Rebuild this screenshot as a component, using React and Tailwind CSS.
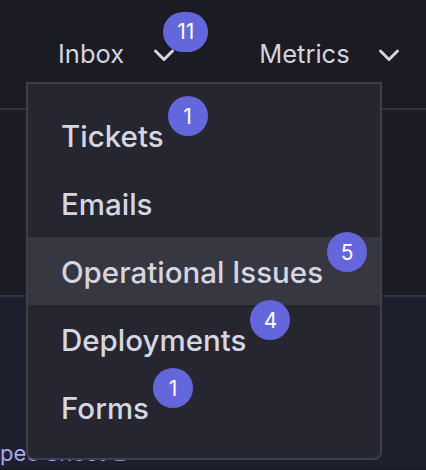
import React from 'react';
import { ExternalLink } from 'lucide-react';

const items = [
  { label: 'Tickets', count: 1 },
  { label: 'Emails' },
  { label: 'Operational Issues', count: 5, active: true },
  { label: 'Deployments', count: 4 },
  { label: 'Forms', count: 1 },
];

const Chevron = () => (
  <svg width="22" height="15" viewBox="0 0 22 15" fill="none">
    <path d="M2.5 3 L11 11.5 L19.5 3" stroke="#d4d4de" strokeWidth="3" strokeLinecap="round" strokeLinejoin="round" />
  </svg>
);

const Badge = ({ children, className = '' }) => (
  <span className={`absolute flex h-10 min-w-10 items-center justify-center rounded-full bg-[#6466dc] px-3 text-[21px] font-normal leading-none text-white ${className}`}>
    {children}
  </span>
);

export default function App() {
  return (
    <div className="relative h-[470px] w-full overflow-hidden bg-[#1b1b23] font-['Inter',sans-serif]">
      {/* top navigation */}
      <nav className="flex h-[110px] items-start border-b-2 border-[#33333d] pt-[37px] pl-[58px]">
        <div className="flex items-center gap-[29px]">
          <span className="text-[25.5px] leading-[34px] text-[#d4d4de]">Inbox</span>
          <span className="relative mt-[2px]">
            <Chevron />
            <Badge className="left-[10px] -top-[36px] !px-0 w-[45px]">11</Badge>
          </span>
        </div>
        <div className="ml-[84px] flex items-center gap-[28px]">
          <span className="text-[25.5px] leading-[34px] text-[#d4d4de]">Metrics</span>
          <span className="mt-[2px]">
            <Chevron />
          </span>
        </div>
      </nav>

      <section className="h-[187px] border-b-2 border-[#33333d] bg-[#1c1c25]" />

      <section className="h-[171px] bg-[#1e1f2d] pt-[140px]">
        <a className="ml-[-14px] flex items-center gap-[8px] text-[22px] text-[#a5a7f3]">
          Spec Sheet
          <ExternalLink size={16} strokeWidth={2} />
        </a>
      </section>

      {/* dropdown menu */}
      <div className="absolute left-[26px] top-[82px] w-[356px] h-[378px] rounded-b-lg border-2 border-[#3e3e4c] bg-[#262631] py-[17px]">
        {items.map((it) => (
          <div
            key={it.label}
            className={`flex h-[68px] items-center px-[33px] ${it.active ? 'bg-[#373742]' : ''}`}
          >
            <span className="relative mt-[4px] text-[29.5px] font-medium leading-none text-[#d6d6e0]">
              {it.label}
              {it.count && <Badge className="left-[calc(100%+4px)] -top-[26px]">{it.count}</Badge>}
            </span>
          </div>
        ))}
      </div>
    </div>
  );
}
